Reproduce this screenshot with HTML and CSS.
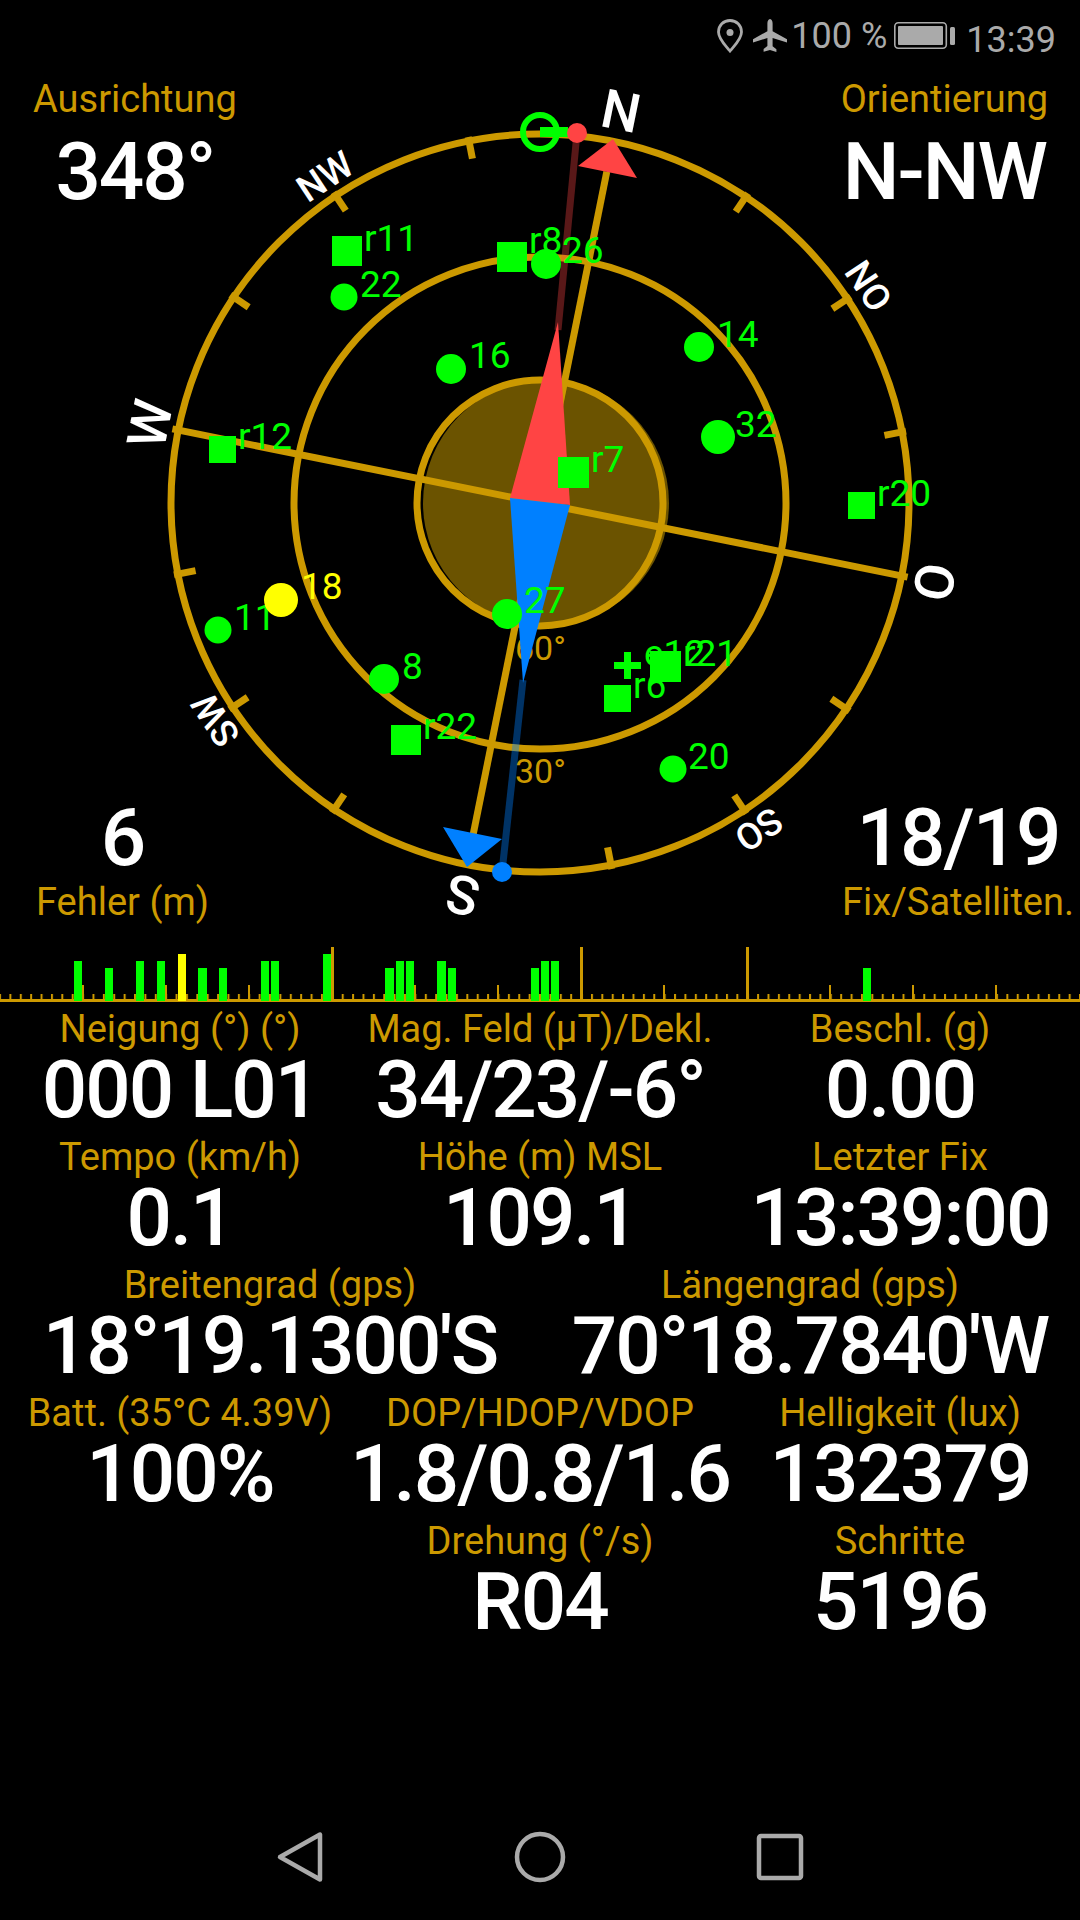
FILE: index.html
```html
<!DOCTYPE html>
<html lang="de">
  <head>
    <meta charset="UTF-8" />
    <meta name="viewport" content="width=device-width, initial-scale=1.0" />
    <title>GPS Status</title>
    <link rel="stylesheet" href="styles.css">
  </head>
  <body>
    <div class="screen">
      <!-- Statusleiste -->
      <div class="status">
        <svg class="status-pin" width="26" height="34" viewBox="0 0 26 34">
          <path d="M13 1.5C6.5 1.5 1.5 6.6 1.5 13c0 7.5 8 14.500 11.500 19 3.500-4.500 11.500-11.500 11.500-19 0-6.400-5-11.500-11.500-11.500z" fill="none" stroke="#aaa" stroke-width="2.800"/>
          <circle cx="13" cy="13.500" r="3.500" fill="#aaa"/>
        </svg>
        <svg class="status-plane" width="34" height="34" viewBox="0 0 34 34">
          <path d="M17 0c1.700 0 2.600 2.200 2.600 4.500v7.700L34 20.300v3.300l-14.400-4.700v8.300l3.800 3v2.800L17 31l-6.400 1.800V30l3.800-3v-8.100L0 23.600v-3.300l14.400-8.100V4.500C14.400 2.200 15.300 0 17 0z" fill="#aaa"/>
        </svg>
        <span class="status-text">100 %</span>
        <svg class="status-battery" width="61" height="27" viewBox="0 0 61 27">
          <rect x="0.800" y="0.800" width="51.500" height="25.400" rx="3.500" fill="none" stroke="#aaa" stroke-width="1.600"/>
          <rect x="4" y="4" width="45" height="19" rx="1" fill="#aaa"/>
          <rect x="56" y="5" width="5" height="18" rx="1.500" fill="#aaa"/>
        </svg>
        <span class="status-text status-clock">13:39</span>
      </div>

      <!-- Kompass -->
      <div class="compass">
        <svg class="compass-canvas" width="1080" height="870" viewBox="0 66 1080 870">
          <circle cx="546" cy="503" r="123" fill="#6b5300"/>
          <g class="rings">
            <circle cx="540" cy="503" r="369"/>
            <circle cx="540" cy="503" r="246"/>
            <circle cx="540" cy="503" r="123"/>
          </g>
          <g class="rings" transform="rotate(11.400 540 503)">
            <line x1="540" y1="165" x2="540" y2="841"/>
            <line x1="165" y1="503" x2="915" y2="503"/>
            <g class="ticks">
              <line x1="540" y1="130" x2="540" y2="152" transform="rotate(22.500 540 503)"/>
              <line x1="540" y1="130" x2="540" y2="152" transform="rotate(45 540 503)"/>
              <line x1="540" y1="130" x2="540" y2="152" transform="rotate(67.500 540 503)"/>
              <line x1="540" y1="130" x2="540" y2="152" transform="rotate(112.500 540 503)"/>
              <line x1="540" y1="130" x2="540" y2="152" transform="rotate(135 540 503)"/>
              <line x1="540" y1="130" x2="540" y2="152" transform="rotate(157.500 540 503)"/>
              <line x1="540" y1="130" x2="540" y2="152" transform="rotate(202.500 540 503)"/>
              <line x1="540" y1="130" x2="540" y2="152" transform="rotate(225 540 503)"/>
              <line x1="540" y1="130" x2="540" y2="152" transform="rotate(247.500 540 503)"/>
              <line x1="540" y1="130" x2="540" y2="152" transform="rotate(292.500 540 503)"/>
              <line x1="540" y1="130" x2="540" y2="152" transform="rotate(315 540 503)"/>
              <line x1="540" y1="130" x2="540" y2="152" transform="rotate(337.500 540 503)"/>
            </g>
          </g>
          <g class="cardinal" transform="translate(2 0) rotate(11.400 540 503)">
            <text x="540" y="122">N</text>
            <text x="540" y="122" transform="rotate(90 540 503)">O</text>
            <text x="540" y="122" transform="rotate(180 540 503)">S</text>
            <text x="540" y="122" transform="rotate(270 540 503)">W</text>
          </g>
          <g class="intercardinal" transform="translate(2 0) rotate(11.400 540 503)">
            <text x="540" y="124" transform="rotate(45 540 503)">NO</text>
            <text x="540" y="124" transform="rotate(135 540 503)">SO</text>
            <text x="540" y="124" transform="rotate(225 540 503)">SW</text>
            <text x="540" y="124" transform="rotate(315 540 503)">NW</text>
          </g>
          <text class="elevation" x="515" y="660">60°</text>
          <text class="elevation" x="515" y="783">30°</text>

          <!-- Ziel und Nadel -->
          <circle class="target" cx="540" cy="132" r="17"/>
          <rect x="540" y="127" width="28" height="10" fill="#0f0"/>
          <line x1="577" y1="133" x2="558" y2="330" class="needle-line-n"/>
          <line x1="502" y1="872" x2="523" y2="680" class="needle-line-s"/>
          <circle cx="577" cy="133" r="10" fill="#ff4444"/>
          <circle cx="502" cy="872" r="10" fill="#0080ff"/>
          <polygon points="613,139 578,166 637,178" fill="#ff4444"/>
          <polygon points="443,827 502,839 467,867" fill="#0080ff"/>
          <polygon points="558,322 510,498 570,505" fill="#ff4444"/>
          <polygon points="523,683 510,498 570,505" fill="#0080ff"/>

          <!-- Satelliten -->
          <g class="sats">
            <rect x="332" y="236" width="30" height="30"/><text x="364" y="251">r11</text>
            <circle cx="344" cy="297" r="13.500"/><text x="360" y="297">22</text>
            <rect x="497" y="242" width="30" height="30"/><text x="529" y="253">r8</text>
            <circle cx="546" cy="264" r="15"/><text x="562" y="263">26</text>
            <circle cx="451" cy="369" r="15"/><text x="469" y="368">16</text>
            <rect x="209" y="436" width="27" height="27"/><text x="238" y="449">r12</text>
            <rect x="558" y="457" width="31" height="31"/><text x="591" y="472">r7</text>
            <circle cx="699" cy="347" r="15"/><text x="717" y="347">14</text>
            <circle cx="718" cy="437" r="17"/><text x="735" y="437">32</text>
            <rect x="848" y="492" width="27" height="27"/><text x="877" y="506">r20</text>
            <circle cx="218" cy="630" r="13.500"/><text x="234" y="630">11</text>
            <circle cx="384" cy="679" r="15"/><text x="402" y="679">8</text>
            <rect x="391" y="725" width="30" height="30"/><text x="423" y="739">r22</text>
            <circle cx="507" cy="614" r="15"/><text x="524" y="613">27</text>
            <rect x="614" y="662" width="27" height="7"/><rect x="624" y="652" width="7" height="27"/>
            <text x="644" y="666">e12</text>
            <rect x="650" y="651" width="31" height="31"/><text x="683" y="666">r21</text>
            <rect x="604" y="685" width="27" height="27"/><text x="633" y="698">r6</text>
            <circle cx="673" cy="769" r="13.500"/><text x="688" y="769">20</text>
          </g>
          <g class="sats sats-fix">
            <circle cx="281" cy="600" r="17"/><text x="301" y="599">18</text>
          </g>
        </svg>

        <div class="corners">
          <div class="corner">
            <div class="label">Ausrichtung</div>
            <div class="value">348°</div>
          </div>
          <div class="corner">
            <div class="label">Orientierung</div>
            <div class="value">N-NW</div>
          </div>
        </div>
        <div class="corners corners-bottom">
          <div class="corner">
            <div class="value">6</div>
            <div class="label">Fehler (m)</div>
          </div>
          <div class="corner">
            <div class="value">18/19</div>
            <div class="label">Fix/Satelliten.</div>
          </div>
        </div>
      </div>

      <!-- Signalbalken -->
      <svg class="spectrum" width="1080" height="70" viewBox="0 936 1080 70">
        <defs>
          <pattern id="smallTicks" x="9.400" y="0" width="10.385" height="8" patternUnits="userSpaceOnUse">
            <rect width="2" height="8" fill="#c90"/>
          </pattern>
        </defs>
        <rect x="0" y="994" width="1080" height="6" fill="url(#smallTicks)"/>
        <rect x="0" y="999" width="1080" height="3" fill="#c90"/>
        <g fill="#c90">
          <rect x="82" y="985" width="2" height="15"/>
          <rect x="165" y="985" width="2" height="15"/>
          <rect x="248" y="985" width="2" height="15"/>
          <rect x="331" y="947" width="3" height="53"/>
          <rect x="414" y="985" width="2" height="15"/>
          <rect x="497" y="985" width="2" height="15"/>
          <rect x="580" y="947" width="3" height="53"/>
          <rect x="663" y="985" width="2" height="15"/>
          <rect x="746" y="947" width="3" height="53"/>
          <rect x="829" y="985" width="2" height="15"/>
          <rect x="912" y="985" width="2" height="15"/>
          <rect x="995" y="985" width="2" height="15"/>
        </g>
        <g fill="#0f0">
          <rect x="74" y="961" width="8" height="40"/>
          <rect x="105" y="968" width="8" height="33"/>
          <rect x="136" y="961" width="8" height="40"/>
          <rect x="157" y="961" width="8" height="40"/>
          <rect x="198" y="968" width="9" height="33"/>
          <rect x="219" y="968" width="8" height="33"/>
          <rect x="261" y="961" width="8" height="40"/>
          <rect x="271" y="961" width="8" height="40"/>
          <rect x="323" y="954" width="8" height="47"/>
          <rect x="385" y="968" width="9" height="33"/>
          <rect x="396" y="961" width="8" height="40"/>
          <rect x="406" y="961" width="8" height="40"/>
          <rect x="437" y="961" width="9" height="40"/>
          <rect x="448" y="968" width="8" height="33"/>
          <rect x="531" y="968" width="8" height="33"/>
          <rect x="541" y="961" width="8" height="40"/>
          <rect x="551" y="961" width="8" height="40"/>
          <rect x="863" y="968" width="8" height="33"/>
        </g>
        <rect x="178" y="954" width="8" height="47" fill="#ff0"/>
      </svg>

      <!-- Messwerte -->
      <div class="readings">
        <div class="row">
          <div class="cell"><div class="label">Neigung (°) (°)</div><div class="value">000 L01</div></div>
          <div class="cell"><div class="label">Mag. Feld (µT)/Dekl.</div><div class="value">34/23/-6°</div></div>
          <div class="cell"><div class="label">Beschl. (g)</div><div class="value">0.00</div></div>
        </div>
        <div class="row">
          <div class="cell"><div class="label">Tempo (km/h)</div><div class="value">0.1</div></div>
          <div class="cell"><div class="label">Höhe (m) MSL</div><div class="value">109.1</div></div>
          <div class="cell"><div class="label">Letzter Fix</div><div class="value">13:39:00</div></div>
        </div>
        <div class="row row-two">
          <div class="cell"><div class="label">Breitengrad (gps)</div><div class="value">18°19.1300'S</div></div>
          <div class="cell"><div class="label">Längengrad (gps)</div><div class="value">70°18.7840'W</div></div>
        </div>
        <div class="row">
          <div class="cell"><div class="label">Batt. (35°C 4.39V)</div><div class="value">100%</div></div>
          <div class="cell"><div class="label">DOP/HDOP/VDOP</div><div class="value">1.8/0.8/1.6</div></div>
          <div class="cell"><div class="label">Helligkeit (lux)</div><div class="value">132379</div></div>
        </div>
        <div class="row">
          <div class="cell"></div>
          <div class="cell"><div class="label">Drehung (°/s)</div><div class="value">R04</div></div>
          <div class="cell"><div class="label">Schritte</div><div class="value">5196</div></div>
        </div>
      </div>

      <!-- Navigationsleiste -->
      <div class="nav">
        <svg class="nav-btn" width="240" height="54" viewBox="0 0 240 54">
          <path d="M100 27L140 4.500V49.500z"/>
        </svg>
        <svg class="nav-btn" width="240" height="54" viewBox="0 0 240 54">
          <circle cx="120" cy="27" r="23"/>
        </svg>
        <svg class="nav-btn" width="240" height="54" viewBox="0 0 240 54">
          <rect x="99" y="6" width="42" height="42" rx="2"/>
        </svg>
      </div>
    </div>
  </body>
</html>
```

FILE: styles.css
```css
* {
  margin: 0;
  padding: 0;
  box-sizing: border-box;
}

body {
  background: #000;
  font-family: Roboto, "Liberation Sans", sans-serif;
}

.screen {
  width: 1080px;
  height: 1920px;
  display: flex;
  flex-direction: column;
  overflow: hidden;
  background: #000;
}

/* 상태바 */
.status {
  height: 66px;
  display: flex;
  justify-content: flex-end;
  align-items: flex-start;
  padding: 19px 24px 0 0;
  color: #aaa;
}

.status-text {
  font-size: 36px;
  line-height: 35px;
}

.status-pin {
  margin-right: 10px;
}

.status-plane {
  margin-right: 4px;
}

.status-battery {
  margin: 3px 11px 0 7px;
}

.status-clock {
  margin-top: 4px;
}

/* 나침반 */
.compass {
  position: relative;
  height: 870px;
  display: flex;
  flex-direction: column;
  justify-content: space-between;
}

.compass-canvas {
  position: absolute;
  top: 0;
  left: 0;
}

.corners {
  position: relative;
  display: flex;
  justify-content: space-between;
  padding: 11px 32px 0 33px;
}

.corners-bottom {
  padding: 0 6px 12px 36px;
}

.corner {
  display: flex;
  flex-direction: column;
  align-items: center;
}

.label {
  color: #c90;
  font-size: 38px;
  line-height: 44px;
  white-space: nowrap;
}

.value {
  color: #fff;
  font-size: 80px;
  font-weight: 500;
  letter-spacing: -2px;
  line-height: 84px;
  white-space: nowrap;
}

.corners:not(.corners-bottom) .value {
  margin-top: 9px;
}

.rings {
  fill: none;
  stroke: #c90;
  stroke-width: 7;
}

.cardinal text {
  fill: #fff;
  font-size: 54px;
  font-weight: 500;
  text-anchor: middle;
}

.intercardinal text {
  fill: #fff;
  font-size: 37px;
  font-weight: 500;
  text-anchor: middle;
}

.elevation {
  fill: #c90;
  font-size: 34px;
}

.target {
  fill: none;
  stroke: #0f0;
  stroke-width: 6;
}

.needle-line-n {
  stroke: #ff4444;
  stroke-opacity: 0.35;
  stroke-width: 7;
}

.needle-line-s {
  stroke: #0080ff;
  stroke-opacity: 0.4;
  stroke-width: 7;
}

.sats {
  fill: #0f0;
  font-size: 37px;
}

.sats-fix {
  fill: #ff0;
}

/* 신호 막대 */
.spectrum {
  display: block;
  flex-shrink: 0;
}

/* 측정값 */
.readings {
  display: flex;
  flex-direction: column;
  flex: 1;
  padding-top: 1px;
}

.row {
  display: grid;
  grid-template-columns: repeat(3, minmax(0, 1fr));
  height: 128px;
}

.row-two {
  grid-template-columns: repeat(2, minmax(0, 1fr));
}

.cell {
  display: flex;
  flex-direction: column;
  align-items: center;
  min-width: 0;
}

.row .value {
  line-height: 78px;
}

/* 내비게이션 */
.nav {
  display: flex;
  justify-content: center;
  padding-bottom: 36px;
}

.nav-btn {
  fill: none;
  stroke: #aaa;
  stroke-width: 4.500;
  stroke-linejoin: round;
}
```
